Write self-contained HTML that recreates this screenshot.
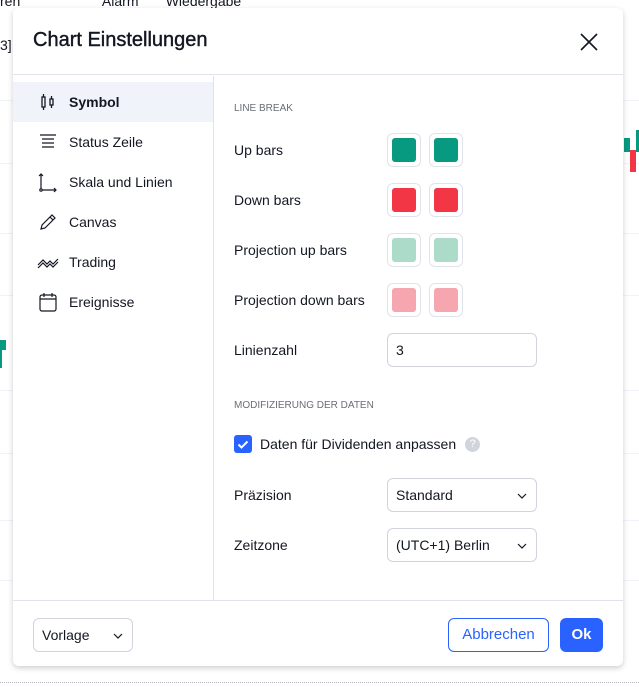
<!DOCTYPE html>
<html><head><meta charset="utf-8"><style>
*{box-sizing:border-box;margin:0;padding:0}
body{width:639px;height:687px;overflow:hidden;background:#fff;font-family:"Liberation Sans",sans-serif;color:#131722;position:relative}
.grid{position:absolute;left:0;right:0;height:1px;background:#f0f3fa}
.dlg{position:absolute;left:13px;top:8px;width:610px;height:658px;background:#fff;border-radius:6px;box-shadow:0 2px 6px rgba(0,0,0,.2);overflow:hidden}
.hdr{height:67px;border-bottom:1px solid #e0e3eb;position:relative}
.hdr h1{position:absolute;left:20px;top:21px;font-size:20px;font-weight:normal;-webkit-text-stroke:.4px #131722}
.side{position:absolute;left:0;top:68px;width:201px;height:524px;border-right:1px solid #e0e3eb}
.it{height:40px;display:flex;align-items:center;font-size:14px;padding-left:24px}
.it svg{width:22px;height:22px;margin-right:10px}
.it.act{background:#f0f3fa;font-weight:bold}
.main{position:absolute;left:221px;top:68px;right:0}
.sec{font-size:10px;color:#6a6d78;position:absolute;left:0}
.row{position:absolute;left:0;font-size:14px;display:flex;align-items:center;height:34px}
.sw{position:absolute;width:34px;height:34px;border:1px solid #e0e3eb;border-radius:6px}
.sw i{position:absolute;left:4px;top:4px;width:24px;height:24px;border-radius:3px}
.inp{position:absolute;left:153px;width:150px;height:34px;border:1px solid #d1d4dc;border-radius:6px;font-size:14px;padding-left:8px;display:flex;align-items:center}
.chev{position:absolute;right:8px;top:11px}
.foot{position:absolute;left:0;right:0;top:592px;border-top:1px solid #e0e3eb;height:66px}
</style></head><body>
<div class="grid" style="top:100px"></div><div class="grid" style="top:163px"></div><div class="grid" style="top:233px"></div><div class="grid" style="top:295px"></div><div class="grid" style="top:390px"></div><div class="grid" style="top:453px"></div><div class="grid" style="top:520px"></div><div class="grid" style="top:580px"></div>
<div style="position:absolute;left:0;font-size:14px;color:#131722;top:-7px">ren &nbsp;&nbsp;&nbsp;&nbsp;&nbsp;&nbsp;&nbsp;&nbsp;&nbsp;&nbsp;&nbsp;&nbsp;&nbsp;&nbsp;&nbsp;&nbsp;&nbsp;&nbsp;&nbsp;&nbsp;Alarm &nbsp;&nbsp;&nbsp;&nbsp;&nbsp;&nbsp;Wiedergabe</div>
<div style="position:absolute;top:37px;left:0;font-size:14px">3]</div>
<div style="position:absolute;left:0;top:340px;width:6px;height:10px;background:#089981"></div>
<div style="position:absolute;left:0;top:350px;width:2px;height:18px;background:#089981"></div>
<div style="position:absolute;left:624px;top:138px;width:6px;height:14px;background:#089981"></div>
<div style="position:absolute;left:630px;top:150px;width:6px;height:22px;background:#f23645"></div>
<div style="position:absolute;left:636px;top:130px;width:3px;height:22px;background:#089981"></div>
<div style="position:absolute;left:0;right:0;top:682px;border-top:1px dotted #b2b5be"></div>
<div class="dlg">
 <div class="hdr"><h1>Chart Einstellungen</h1>
  <svg style="position:absolute;right:25px;top:25px" width="18" height="18" viewBox="0 0 18 18"><path d="M1 1L17 17M17 1L1 17" stroke="#131722" stroke-width="1.6"/></svg></div>
 <div class="side">
  <div class="it act" style="margin-top:6px"><svg viewBox="0 0 22 22" fill="none" stroke="#131722" stroke-width="1.3"><rect x="5" y="6" width="3" height="10"/><path d="M6.5 3v3M6.5 16v3"/><rect x="13" y="8" width="3" height="6"/><path d="M14.5 5v3M14.5 14v3"/></svg>Symbol</div>
  <div class="it"><svg viewBox="0 0 22 22" fill="none" stroke="#131722" stroke-width="1.2"><path d="M3 4h16M5 8h12M5 12h12M5 16h12"/></svg>Status Zeile</div>
  <div class="it"><svg viewBox="0 0 22 22" fill="none" stroke="#131722" stroke-width="1.2"><path d="M4 3v15M2 5l2-2 2 2M5 19h14M17 17l2 2-2 2"/><circle cx="4" cy="19" r="1.2"/></svg>Skala und Linien</div>
  <div class="it"><svg viewBox="0 0 22 22" fill="none" stroke="#131722" stroke-width="1.2"><path d="M4 18l1-4L15 4l3 3L8 17z M13 6l3 3"/></svg>Canvas</div>
  <div class="it"><svg viewBox="0 0 22 22" fill="none" stroke="#131722" stroke-width="1.2"><path d="M1 14l5-5 4 4 3-3 3 3 5-5M1 17l5-5 4 4 3-3 3 3 5-5"/></svg>Trading</div>
  <div class="it"><svg viewBox="0 0 22 22" fill="none" stroke="#131722" stroke-width="1.2"><rect x="3" y="4" width="16" height="16" rx="2"/><path d="M3 8h16M7 2v4M15 2v4"/></svg>Ereignisse</div>
 </div>
 <div class="main">
  <div class="sec" style="top:27px">LINE BREAK</div>
  <div class="row" style="top:57px">Up bars</div>
  <div class="sw" style="left:153px;top:57px"><i style="background:#089981"></i></div><div class="sw" style="left:195px;top:57px"><i style="background:#089981"></i></div>
  <div class="row" style="top:107px">Down bars</div>
  <div class="sw" style="left:153px;top:107px"><i style="background:#f23645"></i></div><div class="sw" style="left:195px;top:107px"><i style="background:#f23645"></i></div>
  <div class="row" style="top:157px">Projection up bars</div>
  <div class="sw" style="left:153px;top:157px"><i style="background:#acdcc9"></i></div><div class="sw" style="left:195px;top:157px"><i style="background:#acdcc9"></i></div>
  <div class="row" style="top:207px">Projection down bars</div>
  <div class="sw" style="left:153px;top:207px"><i style="background:#f5a6ae"></i></div><div class="sw" style="left:195px;top:207px"><i style="background:#f5a6ae"></i></div>
  <div class="row" style="top:257px">Linienzahl</div>
  <div class="inp" style="top:257px">3</div>
  <div class="sec" style="top:324px">MODIFIZIERUNG DER DATEN</div>
  <div style="position:absolute;left:0;top:359px;width:18px;height:18px;background:#2962ff;border-radius:3px"><svg width="18" height="18" viewBox="0 0 18 18"><path d="M4.5 9.5l3 3 6-6" stroke="#fff" stroke-width="2" fill="none"/></svg></div>
  <div class="row" style="top:351px;left:26px">Daten für Dividenden anpassen<span style="display:inline-block;width:15px;height:15px;border-radius:50%;background:#d1d4dc;color:#fff;font-size:11px;text-align:center;line-height:15px;margin-left:9px">?</span></div>
  <div class="row" style="top:402px">Präzision</div>
  <div class="inp" style="top:402px">Standard<svg class="chev" width="12" height="12" viewBox="0 0 12 12"><path d="M2 4l4 4 4-4" stroke="#131722" fill="none" stroke-width="1.2"/></svg></div>
  <div class="row" style="top:452px">Zeitzone</div>
  <div class="inp" style="top:452px">(UTC+1) Berlin<svg class="chev" width="12" height="12" viewBox="0 0 12 12"><path d="M2 4l4 4 4-4" stroke="#131722" fill="none" stroke-width="1.2"/></svg></div>
 </div>
 <div class="foot">
  <div class="inp" style="left:20px;top:17px;width:100px;height:34px">Vorlage<svg class="chev" width="12" height="12" viewBox="0 0 12 12"><path d="M2 4l4 4 4-4" stroke="#131722" fill="none" stroke-width="1.2"/></svg></div>
  <div style="position:absolute;left:435px;top:17px;width:101px;height:34px;border:1px solid #2962ff;border-radius:6px;color:#2962ff;font-size:15px;text-align:center;line-height:32px">Abbrechen</div>
  <div style="position:absolute;left:547px;top:17px;width:43px;height:34px;background:#2962ff;border-radius:6px;color:#fff;font-size:15px;font-weight:bold;text-align:center;line-height:34px">Ok</div>
 </div>
</div>
</body></html>
